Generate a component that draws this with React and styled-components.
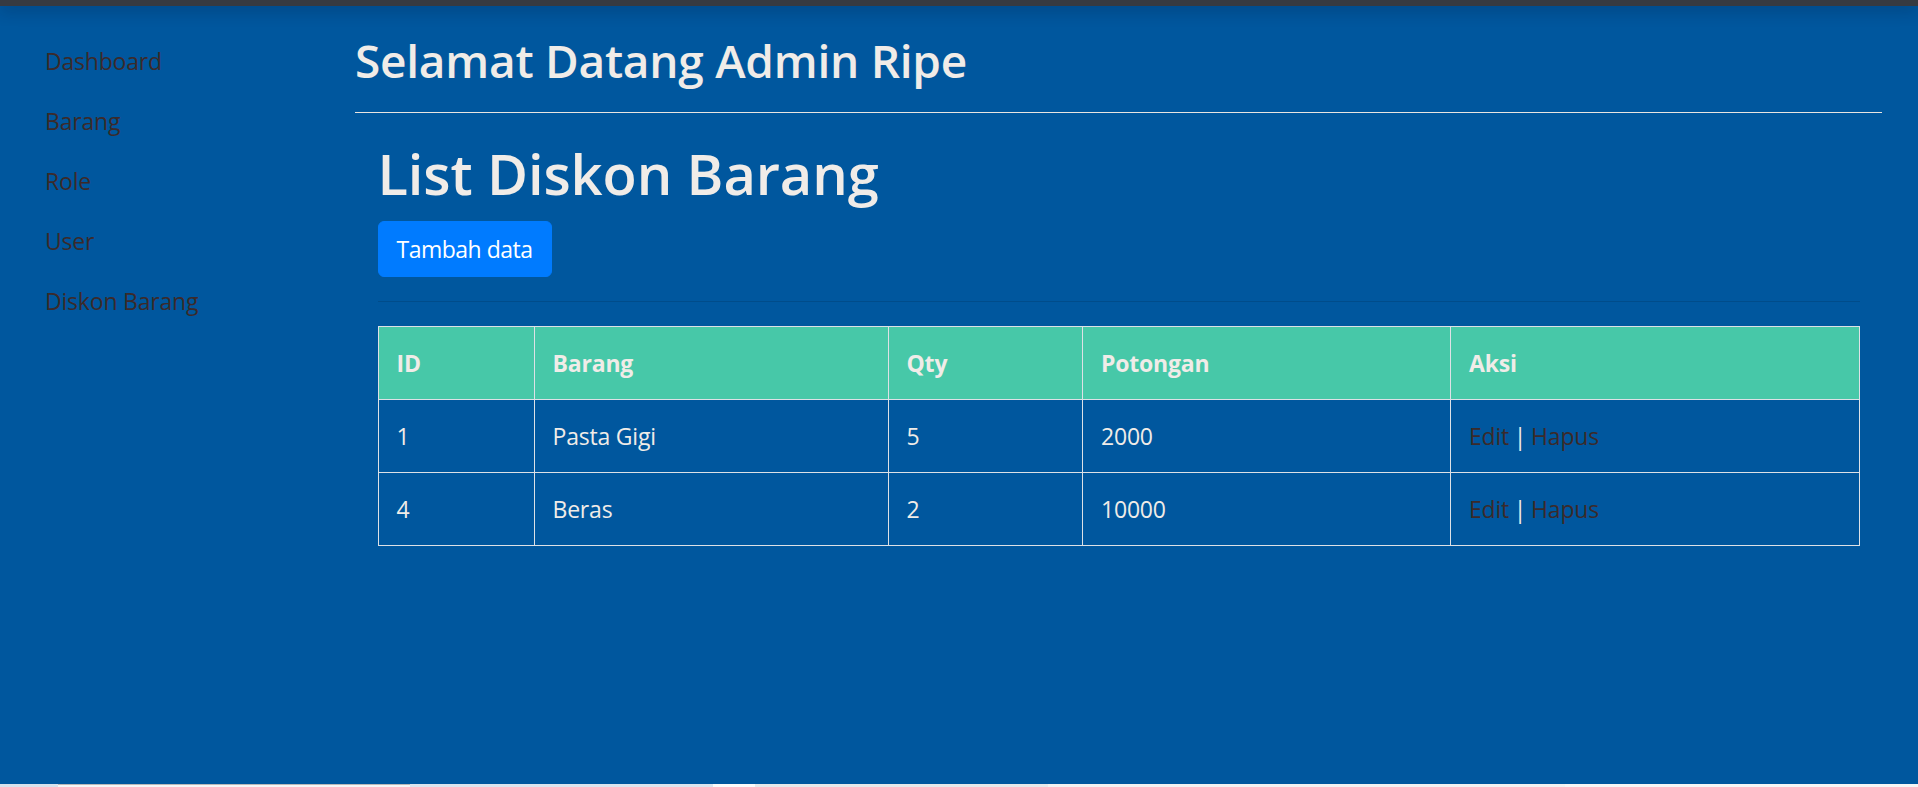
import React from "react";
import styled, { createGlobalStyle } from "styled-components";

const GlobalStyle = createGlobalStyle`
  * { box-sizing: border-box; }
  html, body { margin: 0; padding: 0; }
  body {
    font-family: "Open Sans", "Noto Sans", sans-serif;
    background: #00579e;
    color: #f0ece8;
    letter-spacing: -0.2px;
  }
`;

const Shell = styled.div`
  height: 787px;
  display: flex;
  flex-direction: column;
  overflow: hidden;
`;

const TopBar = styled.div`
  height: 6px;
  flex-shrink: 0;
  background: #363a41;
  position: relative;
  z-index: 1;
  box-shadow: 0 3px 16px rgba(0, 20, 50, 0.45);
`;

const Layout = styled.div`
  flex: 1;
  display: flex;
  background: #00579e;
`;

const Sidebar = styled.nav`
  width: 355px;
  flex-shrink: 0;
  padding: 25px 0 0 21px;
  display: flex;
  flex-direction: column;
`;

const NavLink = styled.a`
  display: block;
  padding: 12px 24px;
  font-size: 23px;
  line-height: 36px;
  color: #3b2a2a;
  text-decoration: none;
`;

const Main = styled.main`
  flex: 1;
  min-width: 0;
  padding: 24px 36px 0 0;
`;

const Greeting = styled.h2`
  margin: 0 0 12px;
  padding-top: 3px;
  font-size: 46px;
  font-weight: 600;
  line-height: 54.6px;
  letter-spacing: -0.25px;
`;

const Rule = styled.hr`
  margin: 24px 0;
  border: 0;
  border-top: 1px solid ${(p) => (p.$faint ? "rgba(0, 0, 0, 0.12)" : "#e9e5e1")};
`;

const Content = styled.section`
  padding: 0 22.5px;
`;

const PageTitle = styled.h1`
  margin: 0 0 12px;
  font-size: 56px;
  font-weight: 600;
  line-height: 72px;
  letter-spacing: -0.1px;
`;

const AddButton = styled.button`
  font-family: inherit;
  font-size: 23px;
  line-height: 36px;
  letter-spacing: -0.5px;
  padding: 9px 18px;
  color: #fff;
  background: #007bff;
  border: 1px solid #007bff;
  border-radius: 6px;
  cursor: pointer;
`;

const Table = styled.table`
  width: 100%;
  border-collapse: collapse;
  table-layout: fixed;
  border: 1px solid #dde1e6;
`;

const HeadRow = styled.tr`
  background: #47c8a8;
`;

const Cell = styled.td`
  padding: 18px;
  border: 1px solid #dde1e6;
  text-align: left;
  font-size: 23px;
  line-height: 36px;
  font-weight: ${(p) => (p.$head ? 700 : 400)};
  white-space: nowrap;
`;

const ActionLink = styled.a`
  color: #3b2a2a;
  text-decoration: none;
  cursor: pointer;
`;

const Separator = styled.span`
  margin: 0 -1px;
`;

const BottomStrip = styled.div`
  height: 3px;
  flex-shrink: 0;
  display: flex;
`;

const StripPart = styled.div`
  width: ${(p) => p.$w}px;
  background: ${(p) => p.$bg};
  border-top: 1px solid ${(p) => p.$line || p.$bg};
`;

const menu = ["Dashboard", "Barang", "Role", "User", "Diskon Barang"];

const rows = [
  { id: 1, barang: "Pasta Gigi", qty: 5, potongan: 2000 },
  { id: 4, barang: "Beras", qty: 2, potongan: 10000 },
];

const strip = [
  { w: 58, bg: "#d7e2ed" },
  { w: 352, bg: "#f6f6f6", line: "#b9b9b9" },
  { w: 303, bg: "#dbe5ef" },
  { w: 42, bg: "#fbfbfb" },
  { w: 293, bg: "#e6e9eb" },
  { w: 517, bg: "#f2f2f2" },
  { w: 353, bg: "#f6f6f6" },
];

export default function App() {
  return (
    <>
      <GlobalStyle />
      <Shell>
        <TopBar />
        <Layout>
          <Sidebar>
            {menu.map((m) => (
              <NavLink key={m} href="#">
                {m}
              </NavLink>
            ))}
          </Sidebar>
          <Main>
            <Greeting>Selamat Datang Admin Ripe</Greeting>
            <Rule />
            <Content>
              <PageTitle>List Diskon Barang</PageTitle>
              <AddButton type="button">Tambah data</AddButton>
              <Rule $faint />
              <Table>
                <colgroup>
                  <col style={{ width: 156 }} />
                  <col style={{ width: 354 }} />
                  <col style={{ width: 194.5 }} />
                  <col style={{ width: 368 }} />
                  <col />
                </colgroup>
                <thead>
                  <HeadRow>
                    <Cell as="th" $head>ID</Cell>
                    <Cell as="th" $head>Barang</Cell>
                    <Cell as="th" $head>Qty</Cell>
                    <Cell as="th" $head>Potongan</Cell>
                    <Cell as="th" $head>Aksi</Cell>
                  </HeadRow>
                </thead>
                <tbody>
                  {rows.map((r) => (
                    <tr key={r.id}>
                      <Cell>{r.id}</Cell>
                      <Cell>{r.barang}</Cell>
                      <Cell>{r.qty}</Cell>
                      <Cell>{r.potongan}</Cell>
                      <Cell>
                        <ActionLink href="#">Edit</ActionLink>
                        <Separator> | </Separator>
                        <ActionLink href="#">Hapus</ActionLink>
                      </Cell>
                    </tr>
                  ))}
                </tbody>
              </Table>
            </Content>
          </Main>
        </Layout>
        <BottomStrip>
          {strip.map((s, i) => (
            <StripPart key={i} $w={s.w} $bg={s.bg} $line={s.line} />
          ))}
        </BottomStrip>
      </Shell>
    </>
  );
}
